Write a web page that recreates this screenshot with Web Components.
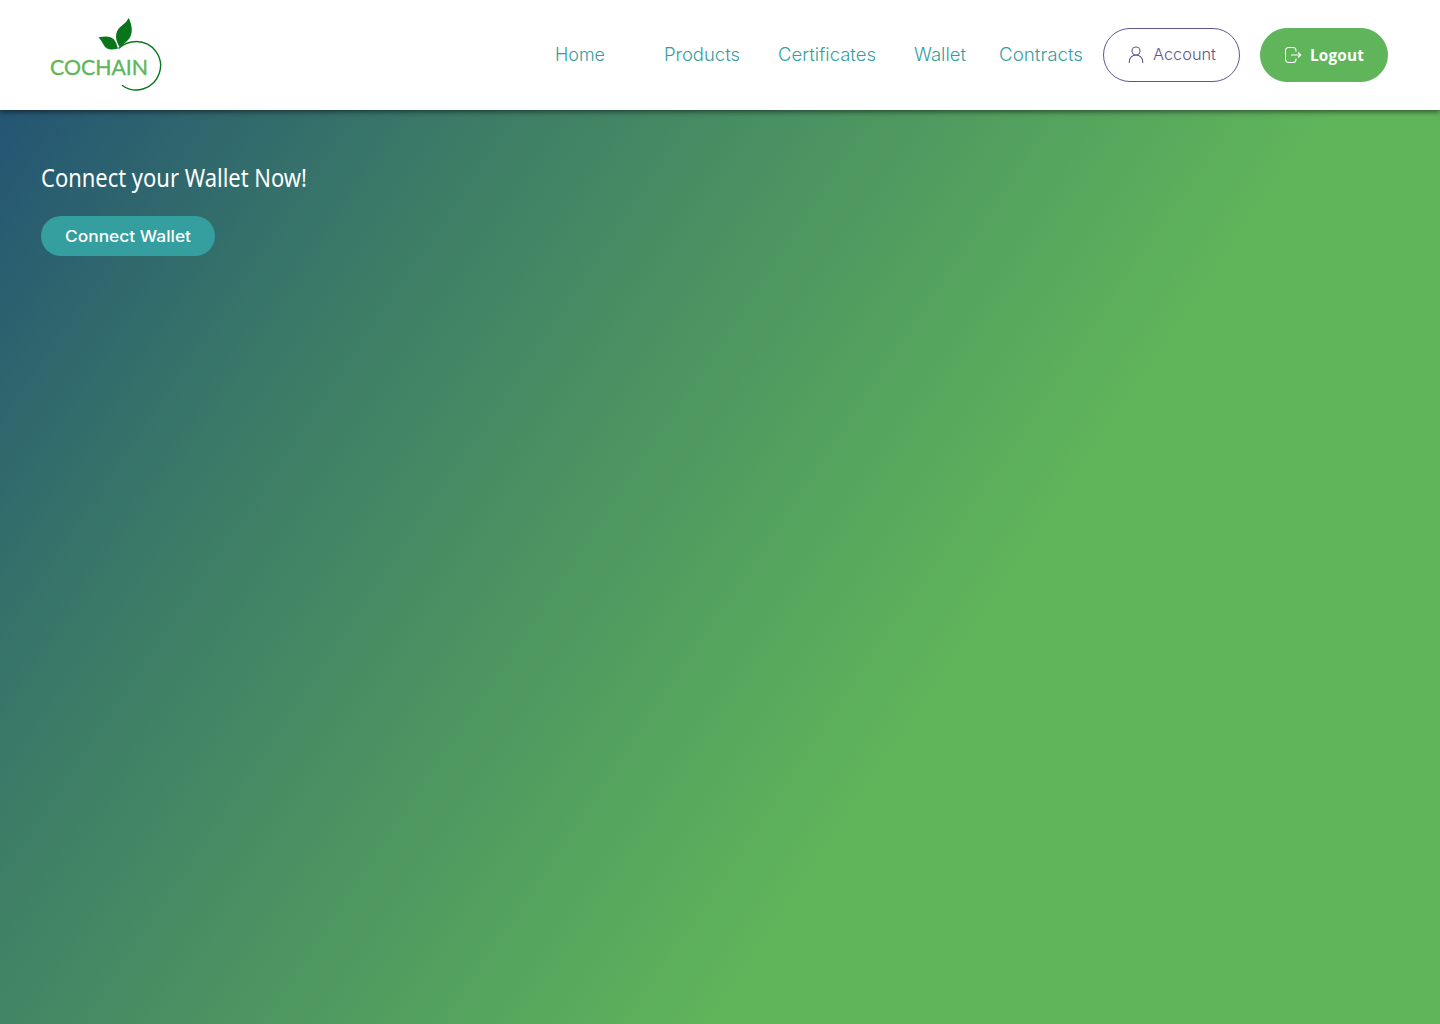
<!DOCTYPE html>
<html lang="en">
<head>
<meta charset="utf-8">
<title>Cochain</title>
<style>
html,body{margin:0;height:100%}
body{font-family:Inter,"Liberation Sans",sans-serif;overflow:hidden}
</style>
</head>
<body>
<cochain-page></cochain-page>
<script>
const mount = (el, html) => { el.attachShadow({mode:'open'}).innerHTML = html; };

// Text set to a given measure by adjusting the width of its glyphs.
customElements.define('fitted-text', class extends HTMLElement {
  connectedCallback() {
    mount(this, `<style>:host{display:block;white-space:nowrap;flex:none;text-align:left}span{display:inline-block;transform-origin:0 50%}</style><span><slot></slot></span>`);
    const target = +this.getAttribute('measure');
    const span = this.shadowRoot.querySelector('span');
    this.style.width = target + 'px';
    const fit = () => {
      span.style.transform = 'none';
      const w = span.getBoundingClientRect().width;
      span.style.transform = `scaleX(${target / w})`;
    };
    fit();
    document.fonts.ready.then(fit);
  }
});

customElements.define('cochain-logo', class extends HTMLElement {
  connectedCallback() {
    mount(this, `<style>:host{display:block;width:112px;height:76px;flex:none;margin-bottom:2px}svg{display:block}text{font:400 20.5px Lato,sans-serif}</style>
    <svg width="112" height="76" viewBox="50 16 112 76">
      <path d="M118.500 48.500C124 43.500 130 41.500 136.500 41.500A24.200 24.200 0 1 1 122 85.200" fill="none" stroke="#08791f" stroke-width="1.400"/>
      <path d="M119.500 47C113.500 37 116 29.500 122 25.500Q126.500 22.500 128.700 18C132 25 133 32 130 37.500Q126.500 42.500 119.500 47Z" fill="#08751a"/>
      <path d="M98.500 37.300C106 35.800 111 36 114 39.500Q116.500 42.500 118 48.400C111 50.500 106.500 49.500 104 45.500Q101.500 40.500 98.500 37.300Z" fill="#08751a"/>
      <text x="50" y="74.500" textLength="98" lengthAdjust="spacingAndGlyphs" fill="#60b55a" stroke="#60b55a" stroke-width=".3">COCHAIN</text>
    </svg>`);
  }
});

customElements.define('nav-link', class extends HTMLElement {
  connectedCallback() {
    mount(this, `<style>:host{display:block;color:#359e9e;font:350 18px/26px Inter,sans-serif}a{color:inherit;text-decoration:none}</style>
    <a><fitted-text measure="${this.getAttribute('measure')}">${this.textContent}</fitted-text></a>`);
  }
});

customElements.define('pill-button', class extends HTMLElement {
  connectedCallback() {
    mount(this, `<style>
    :host{display:block;flex:none}
    button{display:flex;align-items:center;box-sizing:border-box;width:100%;height:54px;border:1px solid #5d5791;border-radius:27px;background:#fff;color:#5d5791;padding:0 24px 1px;font:300 15.800px/24px Inter,sans-serif}
    :host([kind=logout]) button{background:#60b55a;border-color:#60b55a;color:#fff;font:700 15.500px/24px "Open Sans",sans-serif;letter-spacing:.2px}
    :host([kind=connect]) button{height:40px;background:#359e9e;border:0;color:#fff;font:500 15.800px/24px Inter,sans-serif;padding:1px 24px 0}
    ::slotted(svg){display:block;width:18px;height:18px;flex:none;margin-right:7px;margin-top:1px}
    </style><button type="button"><slot name="icon"></slot><slot></slot></button>`);
  }
});

customElements.define('site-header', class extends HTMLElement {
  connectedCallback() {
    mount(this, `<style>
    :host{display:flex;align-items:center;box-sizing:border-box;height:110px;background:#fff;padding:0 52px 0 50px;position:relative;box-shadow:0 2px 5px rgba(0,0,0,.5)}
    nav{display:flex;align-items:center;margin-left:auto}
    .account{width:137px;margin:0 20px}
    .logout{width:128px}
    </style>
    <cochain-logo></cochain-logo>
    <nav>
      <nav-link measure="50" style="margin-right:59px">Home</nav-link>
      <nav-link measure="76" style="margin-right:38px">Products</nav-link>
      <nav-link measure="98" style="margin-right:38px">Certificates</nav-link>
      <nav-link measure="52" style="margin-right:33px">Wallet</nav-link>
      <nav-link measure="84">Contracts</nav-link>
      <pill-button class="account"><svg slot="icon" viewBox="0 0 18 18" fill="none" stroke="#5d5791" stroke-width="1.100"><circle cx="8" cy="5" r="4"/><path d="M1.300 17v-1.300a6.700 6.700 0 0 1 13.400 0V17"/></svg><fitted-text measure="63">Account</fitted-text></pill-button>
      <pill-button class="logout" kind="logout"><svg slot="icon" viewBox="0 0 18 18" fill="none" stroke="#fff" stroke-width="1.100"><path d="M11 5.500V4.500a3 3 0 0 0-3-3H3.500a3 3 0 0 0-3 3v9a3 3 0 0 0 3 3H8a3 3 0 0 0 3-3v-1M6 9h9.500M13 6.500 15.800 9 13 11.500"/></svg><fitted-text measure="54">Logout</fitted-text></pill-button>
    </nav>`);
  }
});

customElements.define('wallet-panel', class extends HTMLElement {
  connectedCallback() {
    mount(this, `<style>
    :host{display:block;flex:1;box-sizing:border-box;padding:50px 41px;background:linear-gradient(124deg,#245573 0%,#3b7a67 22%,#60b55a 65.200%)}
    h1{margin:0 0 20px;color:#fff;font:400 24.500px/36px "Noto Sans",sans-serif}
    pill-button{width:174px}
    </style>
    <h1><fitted-text measure="266">Connect your Wallet Now!</fitted-text></h1>
    <pill-button kind="connect"><fitted-text measure="126">Connect Wallet</fitted-text></pill-button>`);
  }
});

customElements.define('cochain-page', class extends HTMLElement {
  connectedCallback() {
    mount(this, `<style>:host{display:flex;flex-direction:column;height:100vh}</style><site-header></site-header><wallet-panel></wallet-panel>`);
  }
});
</script>
</body>
</html>
